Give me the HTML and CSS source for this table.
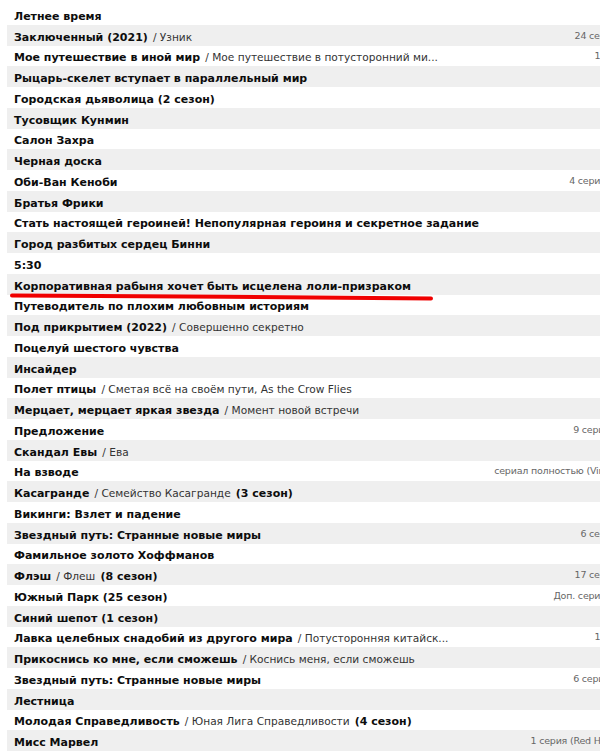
FILE: index.html
```html
<!DOCTYPE html>
<html lang="ru">
<head>
<meta charset="utf-8">
<title>Список</title>
<link rel="stylesheet" href="styles.css">
</head>
<body>
<div class="list">
  <div class="row"><span class="title"><b>Летнее время</b></span><span class="info"></span></div>
  <div class="row"><span class="title"><b>Заключенный (2021)</b> <span class="alt">/ Узник</span></span><span class="info">24 серия (Kerob)</span></div>
  <div class="row"><span class="title"><b>Мое путешествие в иной мир</b> <span class="alt">/ Мое путешествие в потусторонний ми...</span></span><span class="info">1 серия (Ad)</span></div>
  <div class="row"><span class="title"><b>Рыцарь-скелет вступает в параллельный мир</b></span><span class="info"></span></div>
  <div class="row"><span class="title"><b>Городская дьяволица (2 сезон)</b></span><span class="info"></span></div>
  <div class="row"><span class="title"><b>Тусовщик Кунмин</b></span><span class="info"></span></div>
  <div class="row"><span class="title"><b>Салон Захра</b></span><span class="info"></span></div>
  <div class="row"><span class="title"><b>Черная доска</b></span><span class="info"></span></div>
  <div class="row"><span class="title"><b>Оби-Ван Кеноби</b></span><span class="info">4 серия (LostFilm)</span></div>
  <div class="row"><span class="title"><b>Братья Фрики</b></span><span class="info"></span></div>
  <div class="row"><span class="title"><b>Стать настоящей героиней! Непопулярная героиня и секретное задание</b></span><span class="info"></span></div>
  <div class="row"><span class="title"><b>Город разбитых сердец Бинни</b></span><span class="info"></span></div>
  <div class="row"><span class="title"><b>5:30</b></span><span class="info"></span></div>
  <div class="row"><span class="title"><b>Корпоративная рабыня хочет быть исцелена лоли-призраком</b></span><span class="info"></span></div>
  <div class="row"><span class="title"><b>Путеводитель по плохим любовным историям</b></span><span class="info"></span></div>
  <div class="row"><span class="title"><b>Под прикрытием (2022)</b> <span class="alt">/ Совершенно секретно</span></span><span class="info"></span></div>
  <div class="row"><span class="title"><b>Поцелуй шестого чувства</b></span><span class="info"></span></div>
  <div class="row"><span class="title"><b>Инсайдер</b></span><span class="info"></span></div>
  <div class="row"><span class="title"><b>Полет птицы</b> <span class="alt">/ Сметая всё на своём пути, As the Crow Flies</span></span><span class="info"></span></div>
  <div class="row"><span class="title"><b>Мерцает, мерцает яркая звезда</b> <span class="alt">/ Момент новой встречи</span></span><span class="info"></span></div>
  <div class="row"><span class="title"><b>Предложение</b></span><span class="info">9 серия (AniDub)</span></div>
  <div class="row"><span class="title"><b>Скандал Евы</b> <span class="alt">/ Ева</span></span><span class="info"></span></div>
  <div class="row"><span class="title"><b>На взводе</b></span><span class="info">сериал полностью (ViruseProject)</span></div>
  <div class="row"><span class="title"><b>Касагранде</b> <span class="alt">/ Семейство Касагранде</span> <b>(3 сезон)</b></span><span class="info"></span></div>
  <div class="row"><span class="title"><b>Викинги: Взлет и падение</b></span><span class="info"></span></div>
  <div class="row"><span class="title"><b>Звездный путь: Странные новые миры</b></span><span class="info">6 серия (Kerob)</span></div>
  <div class="row"><span class="title"><b>Фамильное золото Хоффманов</b></span><span class="info"></span></div>
  <div class="row"><span class="title"><b>Флэш</b> <span class="alt">/ Флеш</span> <b>(8 сезон)</b></span><span class="info">17 серия (Kerob)</span></div>
  <div class="row"><span class="title"><b>Южный Парк (25 сезон)</b></span><span class="info">Доп. серия (LostFilm)</span></div>
  <div class="row"><span class="title"><b>Синий шепот (1 сезон)</b></span><span class="info"></span></div>
  <div class="row"><span class="title"><b>Лавка целебных снадобий из другого мира</b> <span class="alt">/ Потусторонняя китайск...</span></span><span class="info">1 серия (Ad)</span></div>
  <div class="row"><span class="title"><b>Прикоснись ко мне, если сможешь</b> <span class="alt">/ Коснись меня, если сможешь</span></span><span class="info"></span></div>
  <div class="row"><span class="title"><b>Звездный путь: Странные новые миры</b></span><span class="info">6 серия (AniDub)</span></div>
  <div class="row"><span class="title"><b>Лестница</b></span><span class="info"></span></div>
  <div class="row"><span class="title"><b>Молодая Справедливость</b> <span class="alt">/ Юная Лига Справедливости</span> <b>(4 сезон)</b></span><span class="info"></span></div>
  <div class="row"><span class="title"><b>Мисс Марвел</b></span><span class="info">1 серия (Red Head Sound)</span></div>
  <svg class="mark" width="424" height="10" viewBox="0 0 424 10" aria-hidden="true"><path d="M2 3.5 C 120 4, 300 5, 421 6.5" stroke="#f00000" stroke-width="4" fill="none" stroke-linecap="round"/></svg>
</div>
</body>
</html>
```

FILE: styles.css
```css
html, body {
  margin: 0;
  padding: 0;
  overflow: hidden;
  background: #fff;
}
body {
  padding: 4px 0 0 7px;
  width: 800px;
}
.list {
  position: relative;
  width: 652px;
  font-family: "DejaVu Sans", Verdana, sans-serif;
}
.row {
  display: flex;
  align-items: center;
  justify-content: space-between;
  height: 20.75px;
  padding: 0 6px 0 7px;
  white-space: nowrap;
}
.row:nth-child(even) {
  background: #efefef;
}
.title b {
  font-weight: bold;
  font-size: 11px;
  color: #0d0d0d;
}
.alt {
  font-size: 10.6px;
  color: #333;
}
.info {
  font-size: 9.5px;
  letter-spacing: -0.2px;
  color: #666;
}
.mark {
  position: absolute;
  left: 3px;
  top: 288px;
}
```
